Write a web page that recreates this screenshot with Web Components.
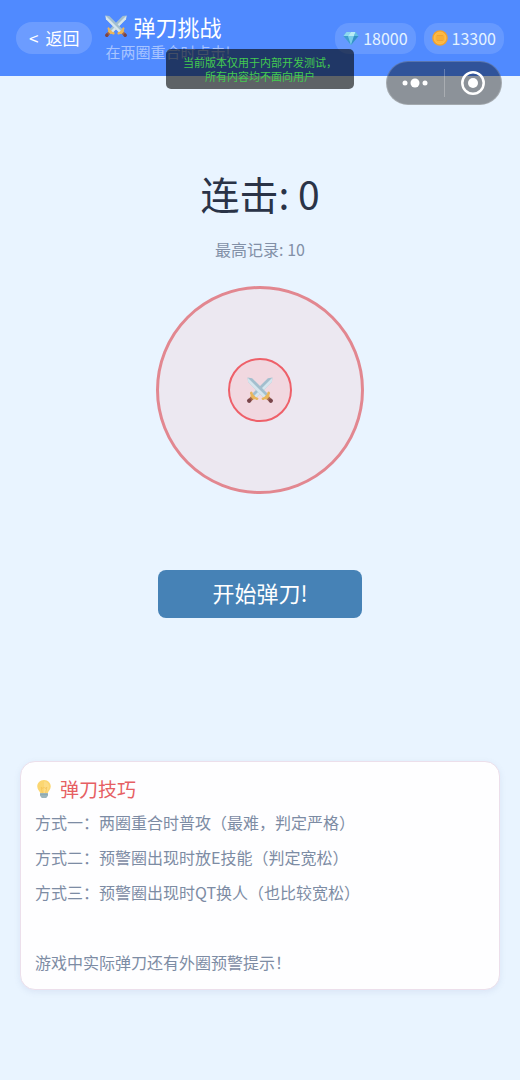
<!DOCTYPE html>
<html lang="zh-CN">
<head>
<meta charset="utf-8">
<meta name="viewport" content="width=device-width, initial-scale=1">
<title>弹刀挑战</title>
<style>
  body {
    margin: 0;
    background: #e9f4ff;
    color: #2a3347;
    font: 16px/24px "Noto Sans CJK SC", "Noto Sans", sans-serif;
  }
</style>
</head>
<body>
<parry-app></parry-app>

<template id="icon-swords">
  <svg viewBox="2 2 28 28" aria-hidden="true">
    <defs>
      <g id="sword">
        <path d="M16-3 19 1V26H13V1Z" fill="#a3bfce"/>
        <path d="M16-3 19 1V26H16Z" fill="#d6e6ee"/>
        <path d="M14 27h4v5h-4z" fill="#a5654c"/>
        <path d="M11 23.500c1.400-.6 2 1 3 1h4c1 0 1.600-1.600 3-1 1.400 1 .6 3-.8 3-1.200 0-1.400 1.800-2.600 1.800h-3.200c-1.200 0-1.400-1.800-2.600-1.800-1.400 0-2.200-2-.8-3Z" fill="#e9b65c"/>
        <circle cx="16" cy="32.500" r="2.300" fill="#79454a"/>
      </g>
    </defs>
    <use href="#sword" transform="rotate(45 16 16)"/>
    <use href="#sword" transform="matrix(-1 0 0 1 32 0) rotate(45 16 16)"/>
  </svg>
</template>

<template id="icon-gem">
  <svg viewBox="0 0 32 32" aria-hidden="true">
    <path d="M7 4h18l6 8-15 18L1 12Z" fill="#55b3df"/>
    <path d="M7 4h9l-6 8H1Z" fill="#8dd8ef"/>
    <path d="M16 4h9l-3 8H10Z" fill="#b9ecf5"/>
    <path d="M25 4l6 8h-9Z" fill="#62bfe4"/>
    <path d="M1 12h9l6 18Z" fill="#3f9bd0"/>
    <path d="M10 12h12l-6 18Z" fill="#78cde9"/>
    <path d="M22 12h9L16 30Z" fill="#348fc7"/>
  </svg>
</template>

<template id="icon-coin">
  <svg viewBox="0 0 32 32" aria-hidden="true">
    <circle cx="16" cy="16" r="15.500" fill="#f2a12c"/>
    <circle cx="16" cy="16" r="12" fill="#fdb840" stroke="#ffcb68" stroke-width="1"/>
    <path d="M10 11h12v10H10zM14 11v10M18 11v10" fill="none" stroke="#eda134" stroke-width="1.600"/>
  </svg>
</template>

<template id="icon-bulb">
  <svg viewBox="0 0 32 32" aria-hidden="true">
    <path d="M16 0C8.500 0 4 5.400 4 11.500c0 5.500 4.500 8 5.500 12.500h13c1-4.500 5.500-7 5.500-12.500C28 5.400 23.500 0 16 0Z" fill="#fbd671"/>
    <path d="M16 2c6 1 9 5 9 10 0 5-4 7-5 12h-4Z" fill="#fcdc85"/>
    <path d="M13 23 11 13l3 2 2-2 2 2 3-2-2 10" fill="none" stroke="#f6c258" stroke-width="1.500"/>
    <path d="M9 23h14v5l-3 4h-8l-3-4Z" fill="#9db5bb"/>
    <path d="M9 26h14" stroke="#8aa6ae" stroke-width="1.500"/>
  </svg>
</template>

<script>
  const define = (name, markup, setup) => {
    customElements.define(name, class extends HTMLElement {
      constructor() {
        super();
        this.attachShadow({ mode: "open" }).innerHTML = markup;
      }
      connectedCallback() {
        if (setup) setup(this);
      }
    });
  };

  define("app-icon", `
    <style>
      :host { display: inline-block; flex: none; width: var(--icon-size, 16px); height: var(--icon-size, 16px); }
      svg { display: block; width: 100%; height: 100%; overflow: visible; }
    </style>`, el => {
    if (el.shadowRoot.querySelector("svg")) return;
    const source = document.getElementById("icon-" + el.getAttribute("name"));
    el.shadowRoot.append(source.content.cloneNode(true));
  });

  define("back-button", `
    <style>
      :host { display: block; flex: none; }
      button {
        display: flex; gap: 7px;
        height: 32px; padding: 0 13px; border: 0; border-radius: 16px;
        background: rgba(255, 255, 255, .16); color: #fff;
        font: inherit; font-size: 17px; line-height: 32px; cursor: pointer;
      }
    </style>
    <button type="button"><span>&lt;</span><slot></slot></button>`);

  define("currency-chip", `
    <style>
      :host {
        display: flex; align-items: center; gap: 4px;
        height: 31px; padding: 0 8px; border-radius: 14px;
        background: rgba(255, 255, 255, .13); color: #e4f3ff;
      }
    </style>
    <slot name="icon"></slot><slot></slot>`);

  define("app-header", `
    <style>
      :host {
        display: flex; align-items: center; gap: 13px;
        padding: 12px 16px; background: #508aff; color: #fff;
      }
      .titles { flex: 1; min-width: 0; white-space: nowrap; }
      h1 {
        display: flex; align-items: center; gap: 6px;
        margin: 0; font-size: 22px; line-height: 28px; font-weight: 400;
        --icon-size: 22px;
      }
      p { margin: 0; font-size: 15px; line-height: 24px; color: rgba(255, 255, 255, .5); }
      .wallet { display: flex; gap: 8px; }
    </style>
    <back-button>返回</back-button>
    <div class="titles">
      <h1><app-icon name="swords"></app-icon><slot></slot></h1>
      <p><slot name="subtitle"></slot></p>
    </div>
    <div class="wallet"><slot name="wallet"></slot></div>`);

  define("dev-notice", `
    <style>
      :host {
        position: absolute; top: 49px; left: 50%; transform: translateX(-50%);
        box-sizing: border-box; width: 188px; padding: 6px 0; border-radius: 5px;
        background: rgba(0, 0, 0, .6); color: #43cb50;
        font-size: 11px; line-height: 14px; text-align: center; white-space: nowrap;
      }
    </style>
    <slot></slot>`);

  define("capsule-menu", `
    <style>
      :host {
        position: absolute; top: 61px; right: 18px;
        box-sizing: border-box; display: flex; align-items: center;
        width: 116px; height: 44px; border-radius: 22px;
        border: 1px solid rgba(255, 255, 255, .2);
        background: rgba(0, 0, 0, .4);
      }
      button {
        flex: 1; display: grid; place-items: center; height: 100%;
        padding: 0; border: 0; background: none; cursor: pointer;
      }
      i { width: 1px; height: 28px; background: rgba(255, 255, 255, .25); }
      svg { display: block; }
    </style>
    <button type="button" aria-label="更多">
      <svg width="26" height="10" viewBox="0 0 26 10" fill="#fff"><circle cx="3" cy="5" r="2.500"/><circle cx="13" cy="5" r="4.500"/><circle cx="23" cy="5" r="2.500"/></svg>
    </button>
    <i></i>
    <button type="button" aria-label="关闭">
      <svg width="24" height="24" viewBox="0 0 24 24"><circle cx="12" cy="12" r="10.700" fill="none" stroke="#fff" stroke-width="2.500"/><circle cx="12" cy="12" r="5" fill="#fff"/></svg>
    </button>`);

  define("combo-score", `
    <style>
      :host { display: block; text-align: center; }
      h2 { margin: 0; font-size: 39px; line-height: 44px; font-weight: 400; color: #2a3347; }
      p { margin: 22px 0 0; color: #8290a7; }
    </style>
    <h2><slot></slot></h2>
    <p><slot name="record"></slot></p>`);

  define("parry-target", `
    <style>
      :host {
        box-sizing: border-box; display: grid; place-items: center;
        width: 208px; height: 208px; border-radius: 50%;
        border: 3px solid #e28790; background: #ece8f1;
      }
      div {
        box-sizing: border-box; display: grid; place-items: center;
        width: 64px; height: 64px; border-radius: 50%;
        border: 2px solid #ee6069; background: #f1d8e0;
        --icon-size: 26px;
      }
    </style>
    <div><app-icon name="swords"></app-icon></div>`);

  define("primary-button", `
    <style>
      :host { display: block; }
      button {
        width: 204px; height: 48px; padding: 0 0 4px; border: 0; border-radius: 8px;
        background: #4682b6; color: #fff;
        font: inherit; font-size: 22px; line-height: 44px; cursor: pointer;
      }
    </style>
    <button type="button"><slot></slot></button>`);

  define("tips-card", `
    <style>
      :host {
        display: block; padding: 14px; border-radius: 15px;
        border: 1px solid #ecdfeb; background: #fefeff; color: #7d8ca4;
        box-shadow: 0 2px 6px rgba(110, 120, 170, .12);
      }
      h2 {
        display: flex; align-items: center; gap: 7px;
        margin: 0 0 8px; font-size: 19px; line-height: 26px; font-weight: 400; color: #e65f63;
        --icon-size: 18px;
      }
      .lines { display: grid; gap: 10px; line-height: 25px; }
      ::slotted(p) { margin: 0; }
      ::slotted(p.note) { margin-top: 35px; }
    </style>
    <h2><app-icon name="bulb"></app-icon><slot name="title"></slot></h2>
    <div class="lines"><slot></slot></div>`);

  define("parry-app", `
    <style>
      :host {
        position: relative; box-sizing: border-box;
        display: flex; flex-direction: column; min-height: 100vh; padding-bottom: 90px;
      }
      main { flex: 1; display: flex; flex-direction: column; }
      .stage { flex: 1; display: flex; flex-direction: column; align-items: center; padding: 95px 20px 48px; }
      parry-target { margin: 25px 0 76px; }
      tips-card { margin: 0 20px; }
    </style>
    <app-header>
      弹刀挑战
      <span slot="subtitle">在两圈重合时点击!</span>
      <currency-chip slot="wallet"><app-icon slot="icon" name="gem"></app-icon>18000</currency-chip>
      <currency-chip slot="wallet"><app-icon slot="icon" name="coin"></app-icon>13300</currency-chip>
    </app-header>
    <main>
      <section class="stage">
        <combo-score>连击: 0<span slot="record">最高记录: 10</span></combo-score>
        <parry-target></parry-target>
        <primary-button>开始弹刀!</primary-button>
      </section>
      <tips-card>
        <span slot="title">弹刀技巧</span>
        <p>方式一：两圈重合时普攻（最难，判定严格）</p>
        <p>方式二：预警圈出现时放E技能（判定宽松）</p>
        <p>方式三：预警圈出现时QT换人（也比较宽松）</p>
        <p class="note">游戏中实际弹刀还有外圈预警提示！</p>
      </tips-card>
    </main>
    <dev-notice>当前版本仅用于内部开发测试，<br>所有内容均不面向用户</dev-notice>
    <capsule-menu></capsule-menu>`);
</script>
</body>
</html>
